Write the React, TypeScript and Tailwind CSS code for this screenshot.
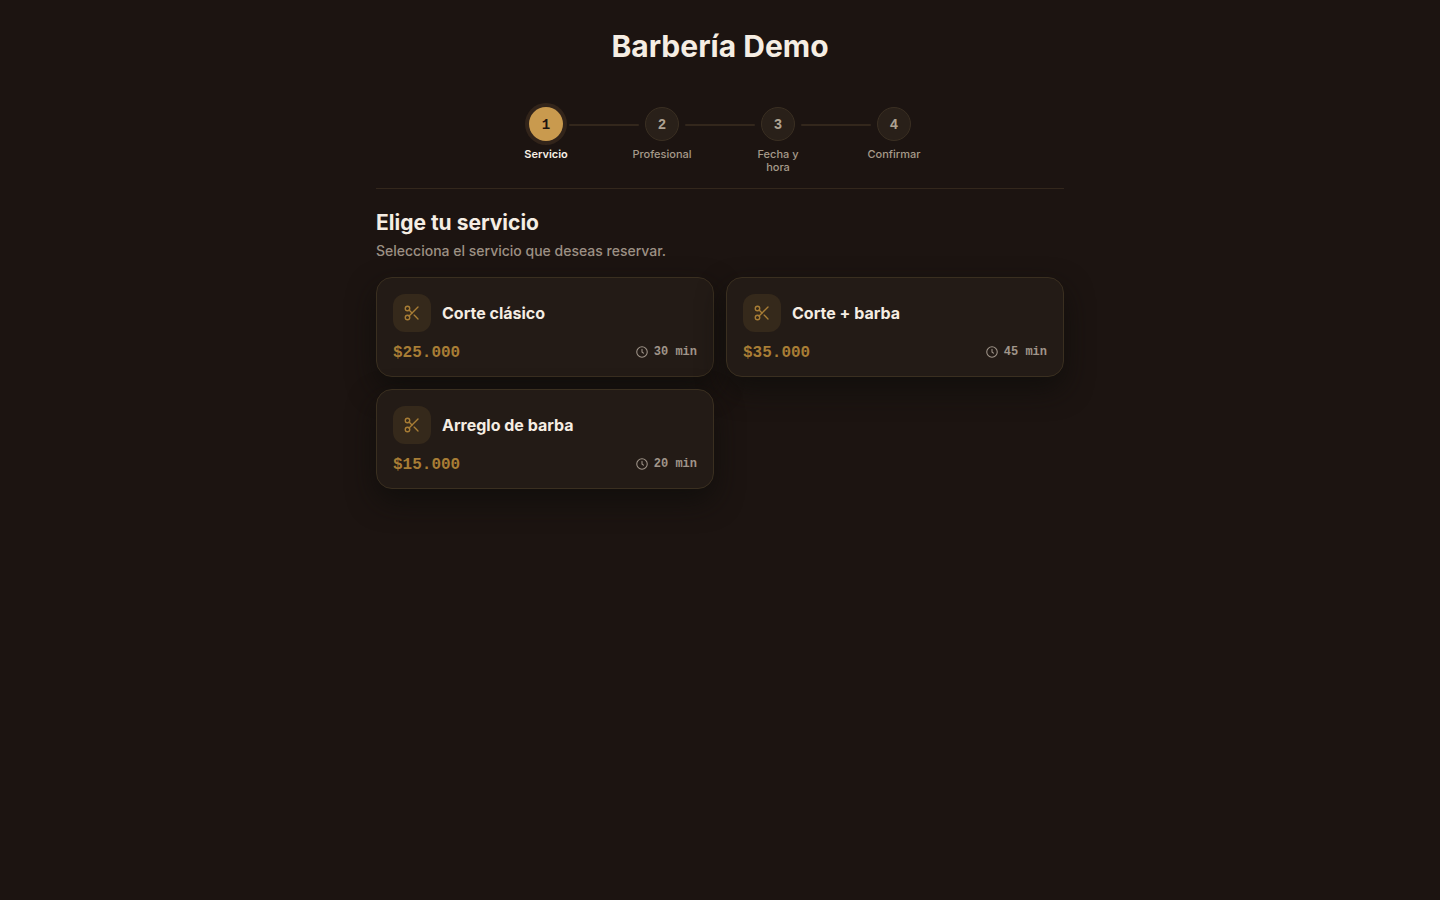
import { Scissors } from "lucide-react";
import { Fragment } from "react";

const steps = ["Servicio", "Profesional", "Fecha y hora", "Confirmar"];

const services = [
  { name: "Corte clásico", price: "$25.000", minutes: 30 },
  { name: "Corte + barba", price: "$35.000", minutes: 45 },
  { name: "Arreglo de barba", price: "$15.000", minutes: 20 },
];

function ClockIcon() {
  return (
    <svg
      viewBox="0 0 24 24"
      className="size-[14px]"
      fill="none"
      stroke="currentColor"
      strokeWidth="1.8"
      strokeLinecap="round"
      strokeLinejoin="round"
      aria-hidden="true"
    >
      <circle cx="12" cy="12" r="9" />
      <path d="M12 7.5V12l2.5 2" />
    </svg>
  );
}

function Stepper({ current }: { current: number }) {
  return (
    <ol className="flex items-start justify-center border-b border-[#33271c] pb-[14px]">
      {steps.map((label, i) => {
        const active = i === current;
        return (
          <Fragment key={label}>
            {i > 0 && (
              <li aria-hidden="true" className="-mx-[9px] mt-[17px] h-[2px] w-[70px] rounded-full bg-[#33271c]" />
            )}
            <li
              aria-current={active ? "step" : undefined}
              className="flex w-16 flex-col items-center gap-[7px]"
            >
              <span
                className={
                  "flex size-[34px] items-center justify-center rounded-full pt-[2px] font-['Liberation_Mono',monospace] text-sm font-bold " +
                  (active
                    ? "bg-[#c99a4e] text-[#1c1410] ring-4 ring-[#32241a]"
                    : "border border-[#3a2f22] bg-[#292019] text-[#aea292]")
                }
              >
                {i + 1}
              </span>
              <span
                className={
                  "text-center text-[11px] leading-[13px] " +
                  (active ? "font-semibold text-[#f7efe4]" : "px-2 font-medium text-[#a69a8a]")
                }
              >
                {label}
              </span>
            </li>
          </Fragment>
        );
      })}
    </ol>
  );
}

function ServiceCard({ name, price, minutes }: (typeof services)[number]) {
  return (
    <button
      type="button"
      className="flex cursor-pointer flex-col gap-3 rounded-2xl border border-[#3a2f20] bg-[#231b16] p-4 text-left shadow-[0_12px_28px_#0f0e0bcc]"
    >
      <span className="flex items-center gap-[11px]">
        <span className="flex size-[38px] shrink-0 items-center justify-center rounded-xl bg-[#35291b] text-[#a87d35]">
          <Scissors size={18} strokeWidth={1.8} aria-hidden="true" />
        </span>
        <span className="text-base leading-5 font-bold text-[#f5ede3]">{name}</span>
      </span>
      <span className="flex w-full items-center justify-between font-['Liberation_Mono',monospace]">
        <span className="pt-[2px] text-base leading-[14px] font-bold text-[#a87d35]">{price}</span>
        <span className="flex items-center gap-[5px] text-xs leading-4 font-bold text-[#a0958a]">
          <ClockIcon />
          {minutes} min
        </span>
      </span>
    </button>
  );
}

export default function App() {
  return (
    <div className="min-h-screen bg-[#1c1411] font-['Inter',sans-serif] text-[#f5ede3]">
      <div className="mx-auto max-w-[720px] px-4 pt-7 pb-10">
        <h1 className="text-center text-3xl leading-9 font-bold">Barbería Demo</h1>
        <nav aria-label="Pasos de la reserva" className="mt-[43px]">
          <Stepper current={0} />
        </nav>
        <main className="mt-5">
          <h2 className="text-[21px] leading-7 font-bold">Elige tu servicio</h2>
          <p className="mt-1 text-sm leading-5 font-medium text-[#9c9084]">
            Selecciona el servicio que deseas reservar.
          </p>
          <div className="mt-4 grid gap-3 sm:grid-cols-2">
            {services.map((s) => (
              <ServiceCard key={s.name} {...s} />
            ))}
          </div>
        </main>
      </div>
    </div>
  );
}
